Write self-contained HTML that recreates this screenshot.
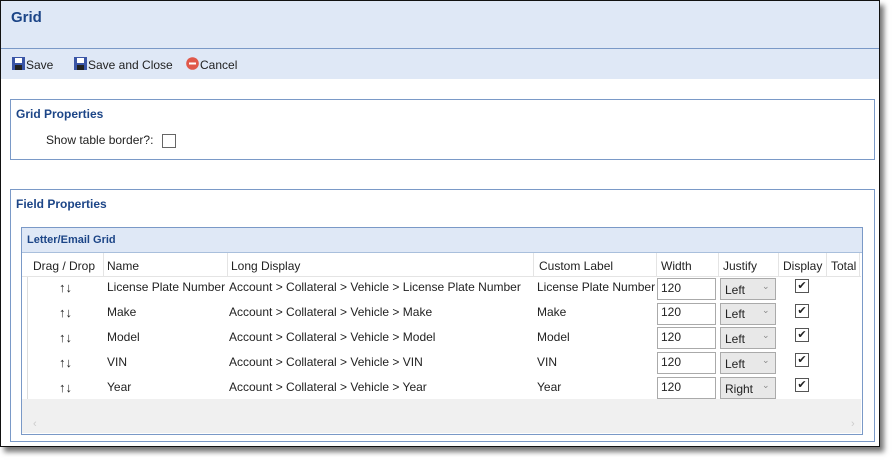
<!DOCTYPE html>
<html><head><style>
body{margin:0;width:895px;height:462px;background:#fff;font-family:"Liberation Sans",sans-serif;font-size:12px;color:#222;position:relative;overflow:hidden}
.win{position:absolute;left:0;top:0;width:878px;height:445px;border:1px solid #111;background:#fff;box-shadow:4px 5px 5px #777}
.hdr{position:absolute;left:0;top:0;width:878px;height:47px;background:#dfe8f6;border-bottom:1px solid #7a99c7}
.hdr b{position:absolute;left:10px;top:8px;font-size:15px;color:#1c4587}
.tb{position:absolute;left:0;top:48px;width:878px;height:30px;background:#dfe8f6}
.tb span{position:absolute;top:9px;font-size:12px}
.ico{position:absolute;top:8px;width:13px;height:13px}
.box{position:absolute;border:1px solid #7a99c7}
.bt{position:absolute;font-weight:bold;color:#1c4587;font-size:12px}
.abs{position:absolute;white-space:nowrap}
.chk{position:absolute;width:12px;height:12px;border:1px solid #555;background:#fff;font-size:11px;line-height:12px;text-align:center}
.inp{position:absolute;width:57px;height:20px;border:1px solid #aaa;background:#fff}
.sel{position:absolute;width:54px;height:20px;border:1px solid #aaa;background:#e8e8e8}
.vl{position:absolute;top:253px;height:23px;width:1px;background:#e4e4e4}
</style></head><body>
<div class="win">
<div class="hdr"><b>Grid</b></div>
<div class="tb">
<svg class="ico" style="left:11px" viewBox="0 0 13 13"><rect width="13" height="13" fill="#3a55a6"/><rect x="3" y="1" width="7" height="5" fill="#fff"/><rect x="3" y="8" width="7" height="5" fill="#222"/></svg><span style="left:25px">Save</span>
<svg class="ico" style="left:73px" viewBox="0 0 13 13"><rect width="13" height="13" fill="#3a55a6"/><rect x="3" y="1" width="7" height="5" fill="#fff"/><rect x="3" y="8" width="7" height="5" fill="#222"/></svg><span style="left:87px">Save and Close</span>
<svg class="ico" style="left:185px" viewBox="0 0 13 13"><circle cx="6.5" cy="6.5" r="6.3" fill="#e0584a"/><rect x="3" y="5.5" width="7" height="2" fill="#fff"/></svg><span style="left:199px">Cancel</span>
</div>
</div>
<div class="box" style="left:10px;top:99px;width:863px;height:59px"></div>
<div class="bt" style="left:16px;top:107px">Grid Properties</div>
<div class="abs" style="left:46px;top:133px">Show table border?:</div>
<div class="chk" style="left:162px;top:134px;border-color:#666"></div>
<div class="box" style="left:10px;top:189px;width:863px;height:251px"></div>
<div class="bt" style="left:16px;top:197px">Field Properties</div>
<div class="box" style="left:21px;top:227px;width:840px;height:206px;background:#fff"></div>
<div class="abs" style="left:22px;top:228px;width:840px;height:24px;background:#dfe8f6;border-bottom:1px solid #a9bfdc"></div>
<div class="bt" style="left:27px;top:234px;font-size:11px">Letter/Email Grid</div>
<div class="abs" style="left:22px;top:399px;width:839px;height:34px;background:#f0f0f0"></div>
<div class="abs" style="left:27px;top:276px;width:1px;height:123px;background:#ddd"></div>
<div class="abs" style="left:22px;top:276px;width:839px;height:1px;background:#e4e4e4"></div>
<div class="vl" style="left:103px"></div><div class="vl" style="left:227px"></div><div class="vl" style="left:533px"></div><div class="vl" style="left:656px"></div><div class="vl" style="left:718px"></div><div class="vl" style="left:778px"></div><div class="vl" style="left:826px"></div><div class="vl" style="left:859px"></div>
<div class="abs" style="left:33px;top:259px">Drag / Drop</div>
<div class="abs" style="left:107px;top:259px">Name</div>
<div class="abs" style="left:231px;top:259px">Long Display</div>
<div class="abs" style="left:539px;top:259px">Custom Label</div>
<div class="abs" style="left:661px;top:259px">Width</div>
<div class="abs" style="left:723px;top:259px">Justify</div>
<div class="abs" style="left:783px;top:259px">Display</div>
<div class="abs" style="left:831px;top:259px">Total</div>

<div class="abs" style="left:59px;top:280px;font-size:13px">↑↓</div><div class="abs" style="left:107px;top:280px">License Plate Number</div><div class="abs" style="left:229px;top:280px">Account &gt; Collateral &gt; Vehicle &gt; License Plate Number</div><div class="abs" style="left:537px;top:280px">License Plate Number</div>
<div class="inp" style="left:657px;top:278px"></div><div class="abs" style="left:661px;top:281px">120</div><div class="sel" style="left:720px;top:278px"></div><div class="abs" style="left:725px;top:283px">Left</div><div class="abs" style="left:762px;top:281px;font-size:9px;color:#888">⌄</div><div class="chk" style="left:795px;top:279px">✔</div>

<div class="abs" style="left:59px;top:305px;font-size:13px">↑↓</div><div class="abs" style="left:107px;top:305px">Make</div><div class="abs" style="left:229px;top:305px">Account &gt; Collateral &gt; Vehicle &gt; Make</div><div class="abs" style="left:537px;top:305px">Make</div>
<div class="inp" style="left:657px;top:303px"></div><div class="abs" style="left:661px;top:305px">120</div><div class="sel" style="left:720px;top:303px"></div><div class="abs" style="left:725px;top:307px">Left</div><div class="abs" style="left:762px;top:305px;font-size:9px;color:#888">⌄</div><div class="chk" style="left:795px;top:304px">✔</div>

<div class="abs" style="left:59px;top:330px;font-size:13px">↑↓</div><div class="abs" style="left:107px;top:330px">Model</div><div class="abs" style="left:229px;top:330px">Account &gt; Collateral &gt; Vehicle &gt; Model</div><div class="abs" style="left:537px;top:330px">Model</div>
<div class="inp" style="left:657px;top:327px"></div><div class="abs" style="left:661px;top:330px">120</div><div class="sel" style="left:720px;top:327px"></div><div class="abs" style="left:725px;top:332px">Left</div><div class="abs" style="left:762px;top:330px;font-size:9px;color:#888">⌄</div><div class="chk" style="left:795px;top:328px">✔</div>

<div class="abs" style="left:59px;top:355px;font-size:13px">↑↓</div><div class="abs" style="left:107px;top:355px">VIN</div><div class="abs" style="left:229px;top:355px">Account &gt; Collateral &gt; Vehicle &gt; VIN</div><div class="abs" style="left:537px;top:355px">VIN</div>
<div class="inp" style="left:657px;top:352px"></div><div class="abs" style="left:661px;top:355px">120</div><div class="sel" style="left:720px;top:352px"></div><div class="abs" style="left:725px;top:357px">Left</div><div class="abs" style="left:762px;top:355px;font-size:9px;color:#888">⌄</div><div class="chk" style="left:795px;top:353px">✔</div>

<div class="abs" style="left:59px;top:380px;font-size:13px">↑↓</div><div class="abs" style="left:107px;top:380px">Year</div><div class="abs" style="left:229px;top:380px">Account &gt; Collateral &gt; Vehicle &gt; Year</div><div class="abs" style="left:537px;top:380px">Year</div>
<div class="inp" style="left:657px;top:377px"></div><div class="abs" style="left:661px;top:380px">120</div><div class="sel" style="left:720px;top:377px"></div><div class="abs" style="left:725px;top:382px">Right</div><div class="abs" style="left:762px;top:380px;font-size:9px;color:#888">⌄</div><div class="chk" style="left:795px;top:378px">✔</div>
<div class="abs" style="left:33px;top:418px;color:#ccc;font-size:11px">‹</div>
<div class="abs" style="left:851px;top:418px;color:#ccc;font-size:11px">›</div>
</body></html>
